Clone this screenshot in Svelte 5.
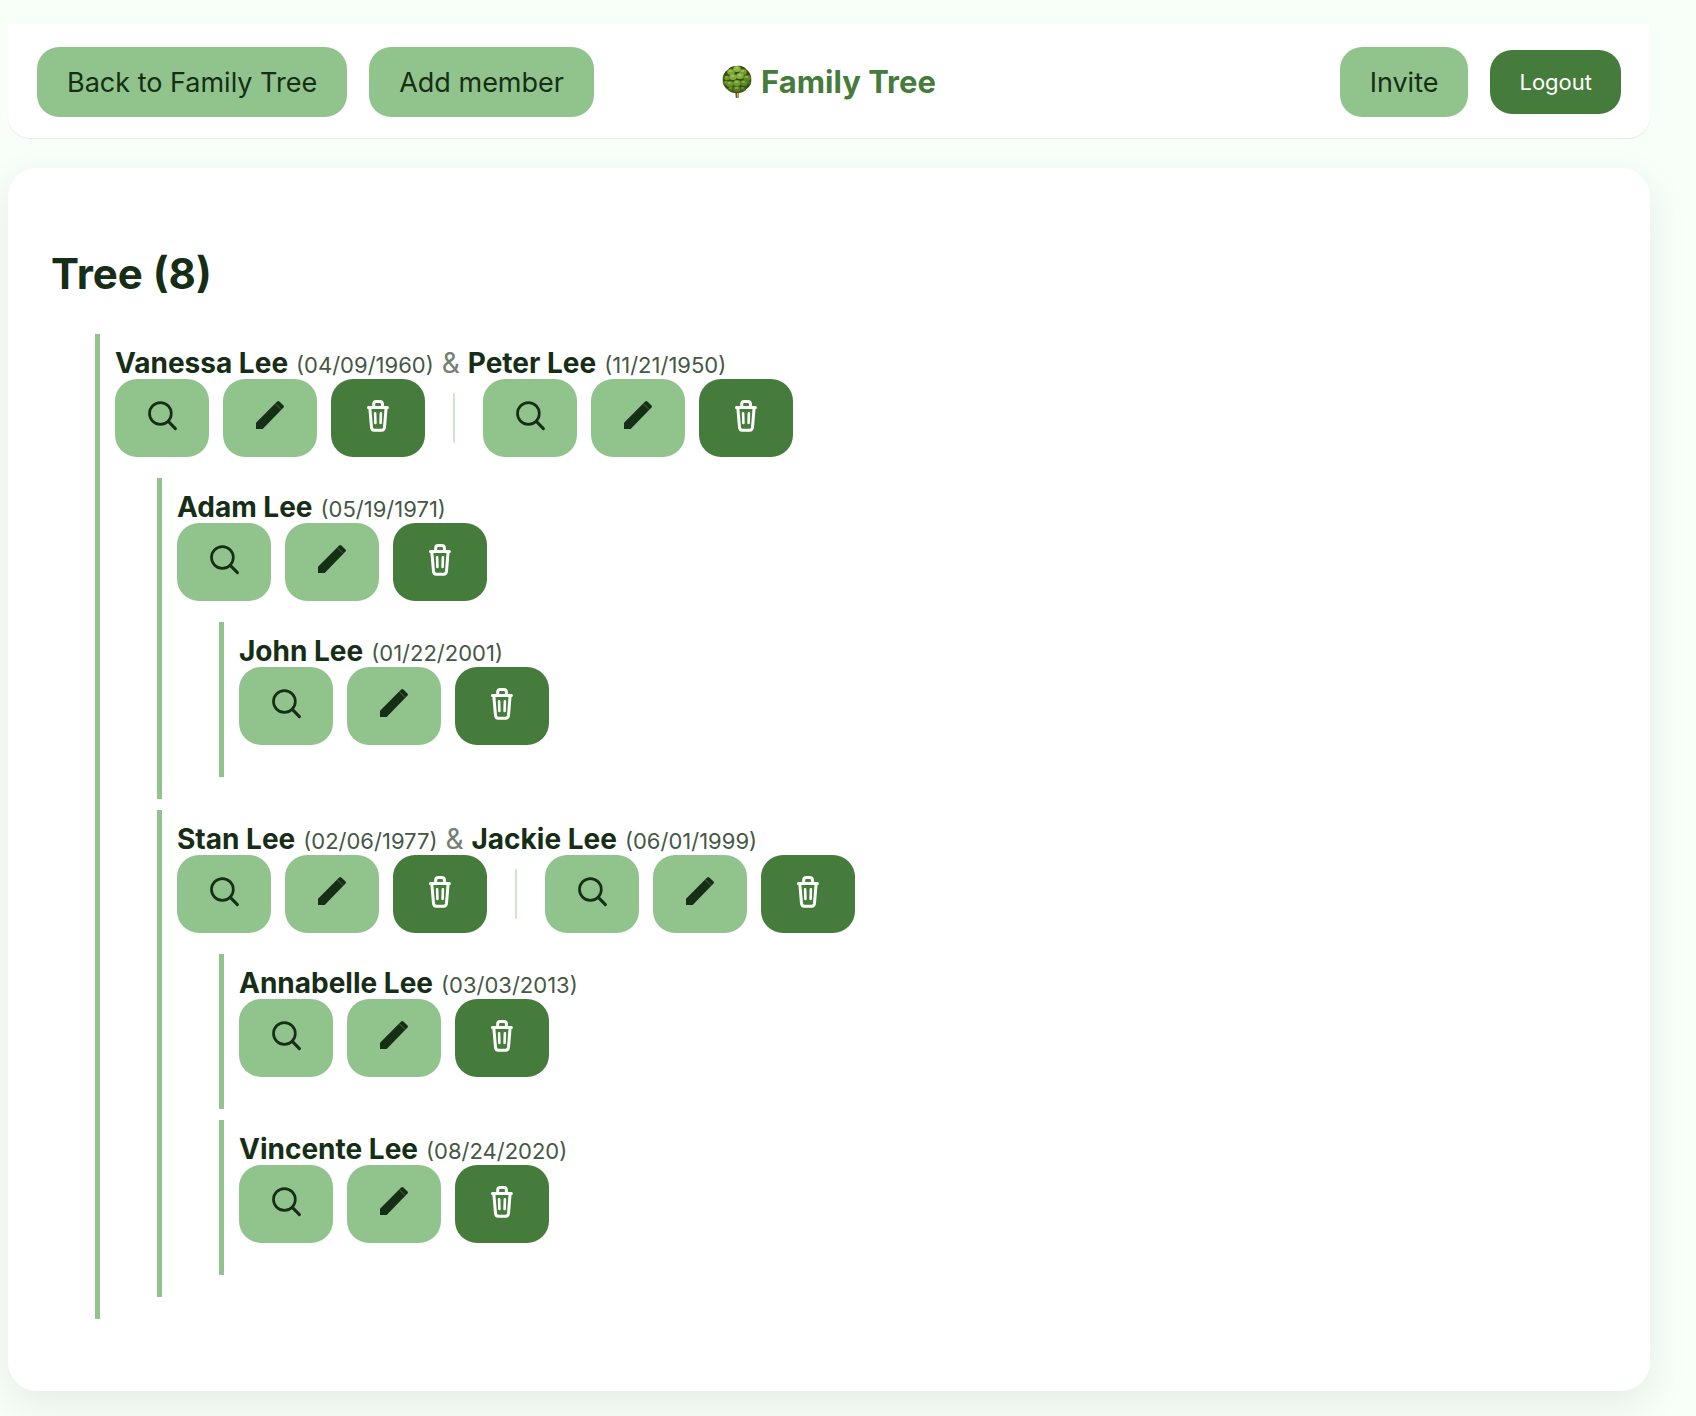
<script>
  const families = [
    {
      people: [
        { name: 'Vanessa Lee', born: '04/09/1960' },
        { name: 'Peter Lee', born: '11/21/1950' }
      ],
      children: [
        {
          people: [{ name: 'Adam Lee', born: '05/19/1971' }],
          children: [{ people: [{ name: 'John Lee', born: '01/22/2001' }], children: [] }]
        },
        {
          people: [
            { name: 'Stan Lee', born: '02/06/1977' },
            { name: 'Jackie Lee', born: '06/01/1999' }
          ],
          children: [
            { people: [{ name: 'Annabelle Lee', born: '03/03/2013' }], children: [] },
            { people: [{ name: 'Vincente Lee', born: '08/24/2020' }], children: [] }
          ]
        }
      ]
    }
  ];

  const count = (nodes) =>
    nodes.reduce((sum, node) => sum + node.people.length + count(node.children), 0);
  const total = count(families);

  // Leaf clumps of the logo's crown: x, y, horizontal radius, fill
  const clumps = [
    [9, 7, 4, '#7fa53a'], [15, 4, 4, '#8fb548'], [21, 7, 4, '#74992f'], [5, 13, 3, '#6d9430'],
    [11, 12, 4, '#83ab3b'], [18, 11, 4, '#88ae42'], [25, 13, 4, '#5f8526'], [4, 18, 3, '#557a20'],
    [8, 19, 4, '#65902a'], [15, 18, 4, '#729b34'], [22, 18, 4, '#5e8627'], [27, 18, 2, '#466a18'],
    [9, 24, 3, '#4a6e1c'], [15, 24, 4, '#557b22'], [21, 24, 3, '#44671a']
  ];
</script>

{#snippet actions(person)}
  <div class="actions">
    <button class="btn icon" type="button" aria-label={`View ${person.name}`}>
      <svg viewBox="0 0 34 34" fill="none" stroke="currentColor" stroke-width="2.7" stroke-linecap="round">
        <circle cx="15.4" cy="14.5" r="10.9" />
        <path d="M23.3 22.4 30.4 29.6" stroke-width="3" />
      </svg>
    </button>
    <button class="btn icon" type="button" aria-label={`Edit ${person.name}`}>
      <svg viewBox="0 0 34 34">
        <path d="M3 23.7 24.2 2.5Q25.3 1.5 26.4 2.5L30.5 6.4Q31.4 7.3 30.5 8.4L9.7 30H3Z" fill="currentColor" />
        <path class="seam" d="M22.3 4.7 27.9 10.3" />
      </svg>
    </button>
    <button class="btn icon dark" type="button" aria-label={`Delete ${person.name}`}>
      <svg viewBox="0 0 34 34" fill="none" stroke="currentColor" stroke-width="3" stroke-linecap="round" stroke-linejoin="round">
        <path d="M7.4 8.4H26.4M12.7 8V5Q12.7 2.4 15.2 2.4H18.8Q21.4 2.4 21.4 5V8" />
        <path d="M8.8 8.6 10.5 28.4Q10.8 31.2 13.2 31.2H20.8Q23.2 31.2 23.5 28.4L25.1 8.6" />
        <path d="M14.1 14.2 14.4 24M19.9 14.2 19.6 24" stroke-width="2.6" />
      </svg>
    </button>
  </div>
{/snippet}

{#snippet branch(nodes)}
  <ul>
    {#each nodes as node}
      <li>
        <p class="names">
          {#each node.people as person, i}
            {#if i > 0}<span class="amp">&amp;</span>{/if}
            <strong>{person.name}</strong>
            <small>({person.born})</small>
          {/each}
        </p>
        <div class="row">
          {#each node.people as person, i}
            {#if i > 0}<span class="divider"></span>{/if}
            {@render actions(person)}
          {/each}
        </div>
        {#if node.children.length}{@render branch(node.children)}{/if}
      </li>
    {/each}
  </ul>
{/snippet}

<div class="page">
  <header>
    <nav class="left">
      <a class="btn" href="#tree">Back to Family Tree</a>
      <a class="btn" href="#add">Add member</a>
    </nav>
    <div class="brand">
      <svg viewBox="0 0 30 34" aria-hidden="true">
        <path d="M13.2 26H17L16.7 32.6Q15.2 33.6 13.7 32.6Z" fill="#7c4f22" />
        <path d="M15 28H16.4V32.6H15Z" fill="#e0ac62" />
        <path d="M15 1Q21 0 24.500 4.500Q29.500 8 29.300 15Q29.500 21 24.500 24Q21 28.500 15 28Q9 28.500 5.500 24.500Q.5 21 .7 15Q.5 8 5.500 5Q9 .5 15 1Z" fill="#34510f" />
        {#each clumps as [x, y, r, fill]}
          <ellipse cx={x} cy={y} rx={r - 0.2} ry={r * 0.75} {fill} />
          <ellipse cx={x - 0.5} cy={y - 0.9} rx={r * 0.5} ry={r * 0.25} fill="#b4d468" opacity="0.55" />
        {/each}
      </svg>
      <span>Family Tree</span>
    </div>
    <nav class="right">
      <a class="btn" href="#invite">Invite</a>
      <button class="btn dark logout" type="button">Logout</button>
    </nav>
  </header>

  <main id="tree">
    <h2>Tree ({total})</h2>
    {@render branch(families)}
  </main>
</div>

<style>
  :global(body) {
    background: #f8fff8;
  }
  .page {
    padding: 24px 46px 25px 8px;
    color: #162d16;
    font: 27px/36px Inter, 'Liberation Sans', sans-serif;
  }
  header {
    position: relative;
    display: grid;
    grid-template-columns: 1fr auto 1fr;
    align-items: center;
    padding: 23px 29px 21px;
    background: #fff;
    border-radius: 0 0 22px 22px;
    box-shadow: 0 1px 1px rgba(0, 0, 0, 0.08);
  }
  .left,
  .right {
    display: flex;
    align-items: center;
    gap: 22px;
  }
  .right {
    justify-content: flex-end;
  }
  .btn {
    display: block;
    box-sizing: border-box;
    padding: 18px 30px 16px;
    border: 0;
    border-radius: 22px;
    background: #91c48c;
    color: #162d16;
    font: inherit;
    text-decoration: none;
    white-space: nowrap;
    cursor: pointer;
  }
  .dark {
    background: #457b3b;
    color: #fff;
  }
  .logout {
    padding: 14px 29px;
    font-size: 22px;
  }
  .brand {
    display: flex;
    align-items: center;
    gap: 9px;
    color: #457b3b;
    font-size: 31px;
    font-weight: 700;
  }
  .brand svg {
    width: 30px;
    height: 34px;
  }
  main {
    margin-top: 30px;
    padding: 80px 43px 72px;
    background: #fff;
    border-radius: 29px;
    box-shadow: 0 14px 43px rgba(0, 0, 0, 0.08);
  }
  h2 {
    margin: 0 0 34px;
    font-size: 42px;
    line-height: 52px;
  }
  ul {
    display: grid;
    gap: 11px;
    margin: 0 0 0 43px;
    padding: 0;
    list-style: none;
  }
  main > :global(ul) {
    margin-left: 44px;
  }
  li {
    padding: 13px 0 22px 15px;
    border-left: 5px solid #91c48c;
  }
  .names {
    display: flex;
    align-items: baseline;
    gap: 8px;
    height: 32px;
    margin: 0;
    font-size: 28px;
    line-height: 32px;
    white-space: nowrap;
  }
  small {
    color: #455745;
    font-size: 22px;
  }
  .amp {
    color: #738173;
  }
  .row {
    display: flex;
    align-items: center;
  }
  li:not(:has(ul)) > .row {
    margin-bottom: 10px;
  }
  .row + :global(ul) {
    margin-top: 21px;
    margin-left: 42px;
  }
  .actions {
    display: flex;
    gap: 14px;
  }
  .icon {
    padding: 20px 30px 24px;
  }
  .icon svg {
    display: block;
    width: 34px;
    height: 34px;
  }
  .seam {
    stroke: #6d936a;
    stroke-width: 0.6;
  }
  .divider {
    width: 2px;
    height: 50px;
    margin: 0 28px;
    background: #cfe5cd;
  }
</style>
